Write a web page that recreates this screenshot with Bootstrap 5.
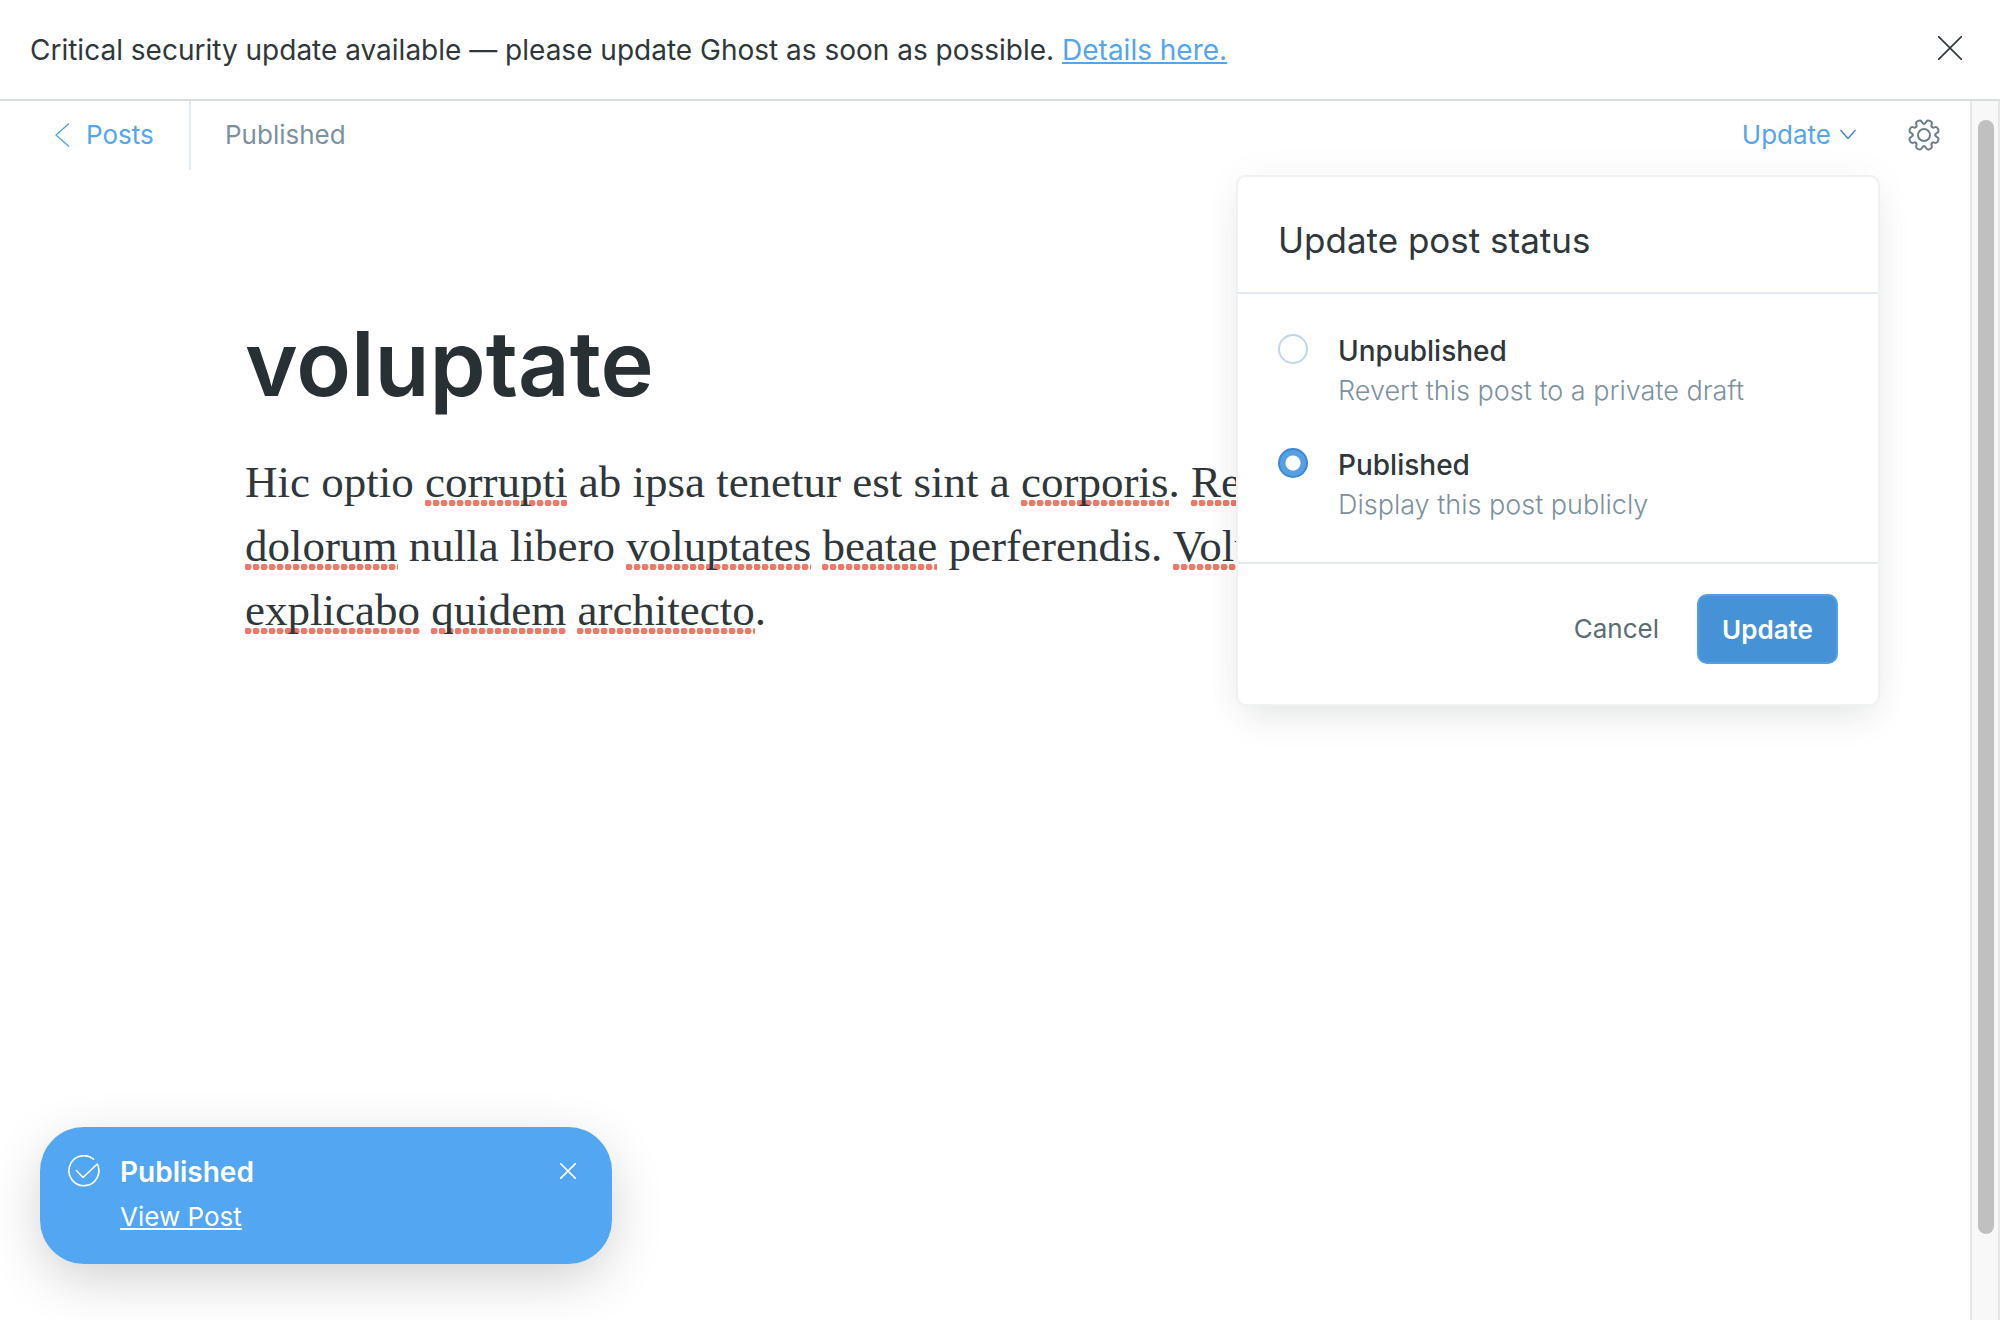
<!DOCTYPE html>
<html lang="en">
<head>
<meta charset="utf-8">
<meta name="viewport" content="width=device-width, initial-scale=1">
<title>Ghost editor</title>
<link href="https://cdn.jsdelivr.net/npm/bootstrap@5.3.0/dist/css/bootstrap.min.css" rel="stylesheet">
<style>
  :root { --ink: #2f373b; --blue: #54a5ec; --line: #e3ebf1; --muted: #7d919d; }
  body { font-family: Inter, sans-serif; font-size: 26px; color: var(--ink); background: #fff; }
  .alert-bar { min-height: 101px; padding: 0 38px 0 30px; border-bottom: 2px solid #dadddd; font-size: 28px; }
  .alert-bar .plain-btn { margin-bottom: 3px; }
  .blue-link { color: var(--blue); }
  .plain-btn { background: none; border: 0; padding: 0; color: inherit; line-height: 1; }
  .plain-btn svg, .back-link svg { display: block; }
  .editor-head { height: 69px; padding-right: 30px; }
  .editor-head > div > * { padding-bottom: 2px; }
  .back-link { width: 191px; padding-left: 55px; gap: 16px; color: var(--blue); border-right: 2px solid var(--line); }
  .post-state { padding-left: 34px; color: var(--muted); }
  .update-toggle { color: var(--blue); gap: 9px; }
  .head-tools { gap: 52px; }
  .writing { padding: 138px 245px 0; }
  .title-box { height: 112px; font-size: 90px; line-height: 112px; font-weight: 600; color: #283034; border: 0; background: none; outline: 0; padding: 0; }
  .prose { margin-top: 30px; font-family: "Liberation Serif", serif; font-size: 45px; line-height: 64px; outline: 0; white-space: nowrap; }
  .typo { background: radial-gradient(circle at 3px 3px, #f0776b 3px, rgba(240,119,107,0) 4px) 0 43px / 8px 6px repeat-x; }
  .status-menu { top: 74px; right: 90px; width: 644px; border: 2px solid #f0f2f2; border-radius: 10px; background: #fff; box-shadow: 0 18px 36px -8px rgba(40,50,50,.1), 0 0 40px rgba(40,50,50,.04); z-index: 5; }
  .status-title { padding: 43px 40px 32px; font-size: 35px; line-height: 40px; font-weight: 400; border-bottom: 2px solid var(--line); }
  .status-list { padding: 38px 40px 36px; gap: 34px; border-bottom: 2px solid var(--line); }
  .status-option { gap: 30px; }
  .status-option input { appearance: none; width: 30px; height: 30px; margin: 2px 0 0; border: 2px solid #c0d6e8; border-radius: 50%; background: #fff; }
  .status-option input:checked { border-color: #3f88d3; background: radial-gradient(circle, #fff 7px, #569fe4 8px); }
  .option-name { font-size: 28px; line-height: 38px; font-weight: 500; }
  .option-note { font-size: 27px; line-height: 42px; font-weight: 300; color: var(--muted); }
  .status-foot { padding: 30px 40px 40px; gap: 38px; }
  .cancel-btn { color: #5b6b73; }
  .save-btn { width: 141px; height: 70px; padding: 0; font-size: 26px; font-weight: 600; color: #fff; background: #4592d7; border: 2px solid #559fe3; border-radius: 10px; }
  .save-btn:hover { color: #fff; background: #3e87ca; }
  .scroll-track { width: 30px; padding: 19px 4px 86px 6px; background: #f8f8f8; border: solid #e7e7e7; border-width: 0 2px; }
  .scroll-thumb { width: 16px; border-radius: 8px; background: #c0c0c0; }
  .notice { left: 40px; bottom: 56px; width: 572px; height: 137px; padding: 24px 36px 0 28px; border-radius: 44px; background: #52a6f2; color: #fff; box-shadow: 0 16px 56px -4px rgba(0,0,0,.2); }
  .notice-icon { margin-top: 4px; margin-right: 20px; }
  .notice-name { font-size: 28px; line-height: 42px; font-weight: 600; }
  .notice-link { color: #fff; line-height: 48px; }
  .notice-close { margin-top: 12px; }
</style>
</head>
<body class="d-flex flex-column vh-100 overflow-hidden">
  <div class="alert-bar d-flex align-items-center justify-content-between" role="alert">
    <div>Critical security update available — please update Ghost as soon as possible. <a class="blue-link" href="#">Details here.</a></div>
    <button class="plain-btn" type="button" aria-label="Dismiss">
      <svg width="24" height="24" viewBox="0 0 24 24" fill="none" stroke="#2f373b" stroke-width="1.6"><path d="M0 0L24 24M24 0L0 24"/></svg>
    </button>
  </div>

  <div class="d-flex flex-grow-1">
    <main class="flex-grow-1 position-relative">
      <header class="editor-head d-flex justify-content-between">
        <div class="d-flex">
          <a class="back-link d-flex align-items-center text-decoration-none" href="#">
            <svg width="15" height="24" viewBox="0 0 15 24" fill="none" stroke="currentColor" stroke-width="1.5"><path d="M14 0.500L1 12L14 23.500"/></svg>
            <span>Posts</span>
          </a>
          <div class="post-state d-flex align-items-center">Published</div>
        </div>
        <div class="head-tools d-flex align-items-center">
          <button class="plain-btn update-toggle d-flex align-items-center" type="button" aria-expanded="true">
            <span>Update</span>
            <svg width="16" height="11" viewBox="0 0 16 11" fill="none" stroke="#3f7fb5" stroke-width="1.3"><path d="M0.500 1L8 9.500L15.500 1"/></svg>
          </button>
          <button class="plain-btn" type="button" aria-label="Settings">
            <svg width="32" height="32" viewBox="-16 -16 32 32" fill="none" stroke="#6c7f89" stroke-width="2" stroke-linecap="round">
              <defs><path id="tooth" d="M-4.300 -10.400C-2.600 -11.100 -3.200 -12 -3 -13.400C-2.600 -15.900 2.600 -15.900 3 -13.400C3.200 -12 2.600 -11.100 4.300 -10.400"/></defs>
              <circle r="6"/>
              <use href="#tooth" transform="rotate(22.500)"/><use href="#tooth" transform="rotate(67.500)"/><use href="#tooth" transform="rotate(112.500)"/><use href="#tooth" transform="rotate(157.500)"/>
              <use href="#tooth" transform="rotate(202.500)"/><use href="#tooth" transform="rotate(247.500)"/><use href="#tooth" transform="rotate(292.500)"/><use href="#tooth" transform="rotate(337.500)"/>
            </svg>
          </button>
        </div>
      </header>

      <section class="writing">
        <input class="title-box w-100 d-block" type="text" value="voluptate" aria-label="Post title">
        <div class="prose" contenteditable="true" spellcheck="false" role="textbox" aria-label="Post body">Hic optio <span class="typo">corrupti</span> ab ipsa tenetur est sint a <span class="typo">corporis</span>. <span class="typo">Rerum</span><br><span class="typo">dolorum</span> nulla libero <span class="typo">voluptates</span> <span class="typo">beatae</span> perferendis. <span class="typo">Voluptas</span><br><span class="typo">explicabo</span> <span class="typo">quidem</span> <span class="typo">architecto</span>.</div>
      </section>

      <form class="status-menu position-absolute">
        <h2 class="status-title m-0">Update post status</h2>
        <div class="status-list d-flex flex-column">
          <div class="status-option d-flex align-items-start">
            <input type="radio" name="status" id="unpublished">
            <label for="unpublished"><span class="option-name d-block">Unpublished</span><span class="option-note d-block">Revert this post to a private draft</span></label>
          </div>
          <div class="status-option d-flex align-items-start">
            <input type="radio" name="status" id="published" checked>
            <label for="published"><span class="option-name d-block">Published</span><span class="option-note d-block">Display this post publicly</span></label>
          </div>
        </div>
        <div class="status-foot d-flex justify-content-end align-items-center">
          <button class="plain-btn cancel-btn" type="button">Cancel</button>
          <button class="btn save-btn" type="button">Update</button>
        </div>
      </form>
    </main>
    <div class="scroll-track d-flex"><div class="scroll-thumb"></div></div>
  </div>

  <aside class="notice position-absolute d-flex align-items-start" role="status">
    <svg class="notice-icon" width="32" height="32" viewBox="0 0 32 32" fill="none" stroke="#fff" stroke-width="1.600" stroke-linecap="round" stroke-linejoin="round"><path d="M25.500 4.200A15 15 0 1 0 29.300 9L15 22.500L8.500 15.500"/></svg>
    <div class="flex-grow-1">
      <div class="notice-name">Published</div>
      <a class="notice-link" href="#">View Post</a>
    </div>
    <button class="plain-btn notice-close" type="button" aria-label="Close">
      <svg width="16" height="16" viewBox="0 0 16 16" fill="none" stroke="#fff" stroke-width="1.600" stroke-linecap="round"><path d="M.5 .5L15.500 15.500M15.500 .5L.5 15.500"/></svg>
    </button>
  </aside>
<script src="https://cdn.jsdelivr.net/npm/bootstrap@5.3.0/dist/js/bootstrap.bundle.min.js"></script>
</body>
</html>
